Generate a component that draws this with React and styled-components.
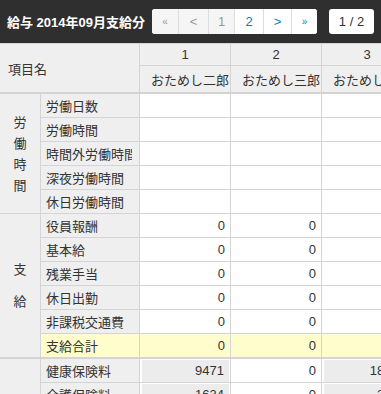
import React from 'react';
import styled, { createGlobalStyle } from 'styled-components';

const GlobalStyle = createGlobalStyle`
  html, body {
    margin: 0;
    padding: 0;
    background: #ffffff;
    overflow: hidden;
  }
  body {
    font-family: "Liberation Sans", "Noto Sans CJK JP", sans-serif;
    font-size: 13px;
    color: #333;
  }
`;

const Page = styled.div`
  width: 381px;
  height: 394px;
  overflow: hidden;
`;

const TopBar = styled.div`
  height: 43px;
  background: #2f2f2f;
  display: flex;
  align-items: center;
  padding: 0 7px;
  box-sizing: border-box;
  gap: 7px;
`;

const Title = styled.h1`
  margin: 0;
  color: #fff;
  font-size: 13px;
  font-weight: bold;
  white-space: nowrap;
`;

const Pager = styled.div`
  display: flex;
  height: 25px;
  border-radius: 3px;
  overflow: hidden;
  background: #fff;
`;

const PageButton = styled.div`
  width: ${p => p.$w}px;
  display: flex;
  align-items: center;
  justify-content: center;
  font-size: ${p => (p.$small ? '10px' : '13px')};
  color: ${p => (p.$disabled ? '#999' : '#0a7ccc')};
  background: ${p => (p.$disabled ? '#f5f5f5' : '#fff')};
  border-left: ${p => (p.$first ? 'none' : '1px solid #ddd')};
  box-sizing: border-box;
`;

const PageInfo = styled.div`
  margin-left: 5px;
  height: 25px;
  width: 45px;
  border-radius: 3px;
  background: #fff;
  color: #333;
  display: flex;
  align-items: center;
  justify-content: center;
  font-size: 13px;
`;

const Grid = styled.table`
  border-collapse: separate;
  border-spacing: 0;
  table-layout: fixed;
  width: 413px;
  border-top: 1px solid #d4d4d4;

  td, th {
    box-sizing: border-box;
    padding: 0;
    border-right: 1px solid #d4d4d4;
    border-bottom: 1px solid #d4d4d4;
    font-weight: normal;
    white-space: nowrap;
    overflow: hidden;
  }
`;

const HeadCell = styled.th`
  background: #efefef;
  height: ${p => p.$h}px;
  text-align: ${p => p.$align || 'center'};
  padding-left: ${p => p.$pad || 0}px !important;
  border-bottom-width: ${p => p.$thick ? '2px' : '1px'} !important;
  vertical-align: middle;
`;

const NameText = styled.div`
  width: 78px;
  overflow: hidden;
  white-space: nowrap;
`;

const GroupCell = styled.td`
  background: #efefef;
  text-align: center;
  vertical-align: middle;
  border-bottom-width: ${p => p.$thick ? '2px' : '1px'} !important;
`;

const GroupChars = styled.div`
  display: flex;
  flex-direction: column;
  align-items: center;
  line-height: ${p => p.$lh}px;
`;

const LabelCell = styled.td`
  height: ${p => p.$h || 24}px;
  background: ${p => (p.$total ? '#fefdcb' : '#efefef')};
  padding-left: 5px !important;
  border-bottom-width: ${p => p.$thick ? '2px' : '1px'} !important;
`;

const LabelText = styled.div`
  width: 86px;
  overflow: hidden;
  white-space: nowrap;
`;

const ValueCell = styled.td`
  background: ${p => (p.$total ? '#fefdcb' : '#fff')};
  text-align: right;
  padding: ${p => (p.$readonly ? '1px 1px 0 2px' : '0 5px 0 0')} !important;
  border-bottom-width: ${p => p.$thick ? '2px' : '1px'} !important;
`;

const ReadonlyBox = styled.div`
  background: #ececec;
  height: 22px;
  line-height: 22px;
  padding-right: 5px;
`;

const groups = [
  {
    name: '労働時間',
    lh: 21,
    rows: [
      { label: '労働日数', values: ['', '', ''] },
      { label: '労働時間', values: ['', '', ''] },
      { label: '時間外労働時間', values: ['', '', ''] },
      { label: '深夜労働時間', values: ['', '', ''] },
      { label: '休日労働時間', values: ['', '', ''] },
    ],
  },
  {
    name: '支給',
    lh: 32,
    rows: [
      { label: '役員報酬', values: ['0', '0', '0'] },
      { label: '基本給', values: ['0', '0', '0'] },
      { label: '残業手当', values: ['0', '0', '0'] },
      { label: '休日出勤', values: ['0', '0', '0'] },
      { label: '非課税交通費', values: ['0', '0', '0'] },
      { label: '支給合計', values: ['0', '0', '0'], total: true },
    ],
  },
  {
    name: '控除',
    lh: 32,
    rows: [
      { label: '健康保険料', values: ['9471', '0', '18942'], readonly: [true, false, true] },
      { label: '介護保険料', values: ['1634', '0', '3268'], readonly: [true, false, true] },
      { label: '厚生年金保険料', values: ['0', '0', '0'] },
      { label: '雇用保険料', values: ['0', '0', '0'] },
      { label: '所得税', values: ['0', '0', '0'] },
      { label: '住民税', values: ['0', '0', '0'] },
      { label: '控除合計', values: ['0', '0', '0'], total: true },
    ],
  },
];

const employees = [
  { no: 1, name: 'おためし二郎' },
  { no: 2, name: 'おためし三郎' },
  { no: 3, name: 'おためし四郎' },
];

function PayrollTable() {
  return (
    <Grid>
      <colgroup>
        <col style={{ width: 41 }} />
        <col style={{ width: 99 }} />
        <col style={{ width: 91 }} />
        <col style={{ width: 91 }} />
        <col style={{ width: 91 }} />
      </colgroup>
      <thead>
        <tr>
          <HeadCell colSpan={2} rowSpan={2} $align="left" $pad={8} $thick>項目名</HeadCell>
          {employees.map(e => (
            <HeadCell key={e.no} $h={22}>{e.no}</HeadCell>
          ))}
        </tr>
        <tr>
          {employees.map(e => (
            <HeadCell key={e.no} $h={28} $align="left" $pad={11} $thick>
              <NameText>{e.name}</NameText>
            </HeadCell>
          ))}
        </tr>
      </thead>
      <tbody>
        {groups.map(g =>
          g.rows.map((r, i) => (
            <tr key={g.name + r.label}>
              {i === 0 && (
                <GroupCell rowSpan={g.rows.length} $thick={g.name === '支給'}>
                  <GroupChars $lh={g.lh}>
                    {g.name.split('').map((c, k) => <span key={k}>{c}</span>)}
                  </GroupChars>
                </GroupCell>
              )}
              <LabelCell $total={r.total} $thick={r.total} $h={r.total ? 25 : 24}>
                <LabelText>{r.label}</LabelText>
              </LabelCell>
              {r.values.map((v, k) => {
                const ro = r.readonly && r.readonly[k];
                return (
                  <ValueCell key={k} $total={r.total} $thick={r.total} $readonly={ro}>
                    {ro ? <ReadonlyBox>{v}</ReadonlyBox> : v}
                  </ValueCell>
                );
              })}
            </tr>
          ))
        )}
      </tbody>
    </Grid>
  );
}

export default function App() {
  return (
    <Page>
      <GlobalStyle />
      <TopBar>
        <Title>給与 2014年09月支給分</Title>
        <Pager>
          <PageButton $w={26} $first $disabled $small>«</PageButton>
          <PageButton $w={30} $disabled>&lt;</PageButton>
          <PageButton $w={26} $disabled>1</PageButton>
          <PageButton $w={29}>2</PageButton>
          <PageButton $w={28}>&gt;</PageButton>
          <PageButton $w={26} $small>»</PageButton>
        </Pager>
        <PageInfo>1 / 2</PageInfo>
      </TopBar>
      <PayrollTable />
    </Page>
  );
}
